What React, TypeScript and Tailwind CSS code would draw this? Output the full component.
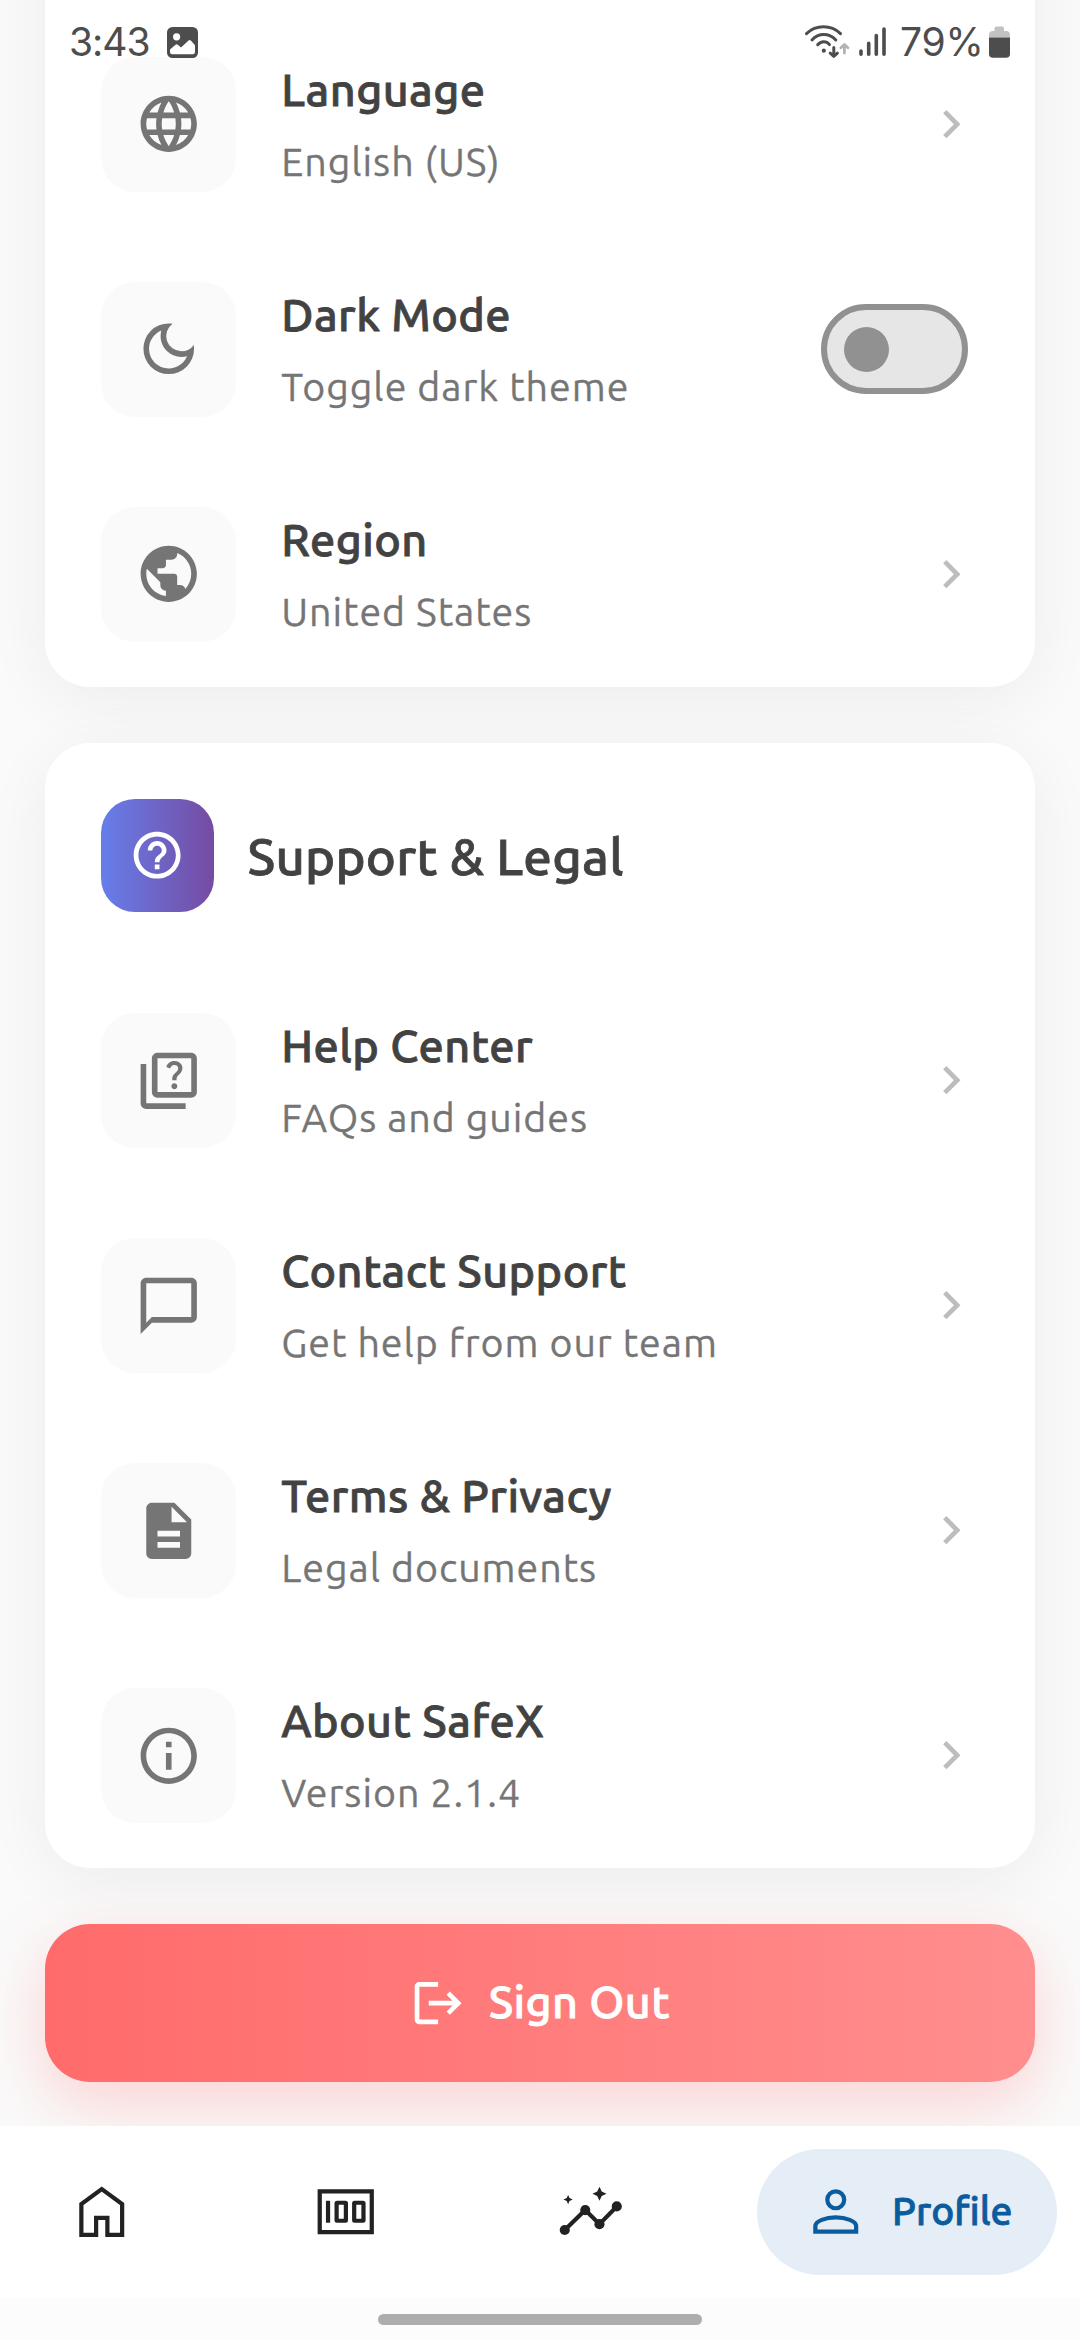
import type { ReactNode } from "react";
import type { IconType } from "react-icons";
import {
  MdChatBubbleOutline,
  MdChevronRight,
  MdDescription,
  MdHelpOutline,
  MdInfoOutline,
  MdLanguage,
  MdLogout,
  MdOutlineDarkMode,
  MdOutlineQuiz,
  MdPublic,
} from "react-icons/md";

function WifiIcon() {
  return (
    <svg className="h-[36px] w-[46px]" viewBox="804 25 46 36" fill="none" strokeLinecap="round" strokeLinejoin="round">
      <g stroke="#4d4d4d" strokeWidth="3">
        <path d="M806.5 34.6C816 25.5 831 25.5 840.5 34.6" />
        <path d="M812 41C818.5 33.8 829 33.8 835.8 41" />
        <path d="M817.7 45.8C821 41.7 826.5 41.7 829.5 45.6" />
        <path d="M833.8 48.5V57M830.2 54.2L833.8 57.4L837.4 54.2" />
      </g>
      <circle cx="823.8" cy="51.7" r="2.1" fill="#4d4d4d" />
      <path d="M844.4 54V45.8M840.9 48.8L844.4 45.5L847.9 48.8" stroke="#b3b3b3" strokeWidth="2.8" />
    </svg>
  );
}

function SignalIcon() {
  return (
    <svg className="h-[30px] w-[27px]" viewBox="859 28 27 30" stroke="#4d4d4d" strokeWidth="3.6" strokeLinecap="round">
      <path d="M861 52V55.2M868.7 44.4V55.2M876.3 36.6V55.2M884 30V55.2" />
    </svg>
  );
}

function BatteryIcon() {
  return (
    <svg className="h-[32px] w-[21px]" viewBox="0 0 21 32">
      <path d="M5.5 5V2.5Q5.5 0.5 7.5 0.5H13Q15 0.5 15 2.5V5H17Q21 5 21 9V11.5H0V9Q0 5 4 5Z" fill="#c2c2c2" />
      <path d="M0 11.5H21V28Q21 31.8 17 31.8H4Q0 31.8 0 28Z" fill="#4d4d4d" />
    </svg>
  );
}

function PhotoIcon() {
  return (
    <svg className="size-[31px]" viewBox="0 0 31 31">
      <rect width="31" height="31" rx="5.5" fill="#4d4d4d" />
      <circle cx="9.6" cy="9.8" r="3.6" fill="#fff" />
      <path d="M3 22.6L8.6 17.7Q9.7 16.8 10.8 17.7L14 20.4L21.6 13.6Q22.8 12.6 24 13.7L28 18.3V25Q28 27.3 25.7 27.3H5.3Q3 27.3 3 25Z" fill="#fff" />
    </svg>
  );
}

function HomeIcon() {
  return (
    <svg className="size-[67.5px]" viewBox="0 0 24 24" fill="none" stroke="#222" strokeWidth="1.5">
      <path d="M4.75 20.25V9.25L12 3.95L19.25 9.25V20.25H14V14.15H10V20.25Z" />
    </svg>
  );
}

function MoneyIcon() {
  return (
    <svg className="size-[67.5px]" viewBox="0 0 24 24" fill="none" stroke="#222" strokeWidth="1.5">
      <path d="M2.75 4.75H21.25V19.25H2.75Z" />
      <path d="M5.7 8.1V15.9" />
      <rect x="8.75" y="8.8" width="3.3" height="6.4" rx="0.15" />
      <rect x="15" y="8.8" width="3.3" height="6.4" rx="0.15" />
    </svg>
  );
}

function InsightsIcon() {
  return (
    <svg className="size-[67.5px]" viewBox="0 0 24 24" fill="#222">
      <path d="M2.75 18.5L10.05 11.4L15.1 16.4L21.25 10.1" fill="none" stroke="#222" strokeWidth="1.5" />
      <circle cx="2.75" cy="18.5" r="1.8" />
      <circle cx="10.05" cy="11.4" r="1.8" />
      <circle cx="15.1" cy="16.4" r="1.8" />
      <circle cx="21.25" cy="10.1" r="1.8" />
      <path d="M15.1 3.1L15.9 4.8L17.6 5.6L15.9 6.4L15.1 8.1L14.3 6.4L12.6 5.6L14.3 4.8Z" />
      <path d="M3.95 6L4.45 7.15L5.6 7.65L4.45 8.15L3.95 9.3L3.45 8.15L2.3 7.65L3.45 7.15Z" />
    </svg>
  );
}

function PersonIcon() {
  return (
    <svg className="size-[67.5px]" viewBox="0 0 24 24" fill="none" stroke="#0b5c9e" strokeWidth="1.5">
      <circle cx="12" cy="7.75" r="3" />
      <path d="M4.75 19.1V17.1C4.75 15.3 8.4 14 12 14S19.25 15.3 19.25 17.1V19.1Z" />
    </svg>
  );
}

function StatusBar() {
  return (
    <div className="absolute inset-x-0 top-0 z-10 flex h-[84px] items-center pl-[69px] pr-[70px] font-['Inter',sans-serif] text-[39px] font-[370] text-[#4d4d4d]">
      <span className="w-[98px] tracking-[-1px]">3:43</span>
      <PhotoIcon />
      <div className="ml-auto flex items-center">
        <WifiIcon />
        <div className="ml-[9px]">
          <SignalIcon />
        </div>
        <span className="ml-[14px] w-[89px] tracking-[-0.2px]">79%</span>
        <BatteryIcon />
      </div>
    </div>
  );
}

function Switch() {
  return (
    <div className="mr-[11.25px] flex h-[90px] w-[146.25px] items-center rounded-full border-[6px] border-[#919191] bg-[#e6e6e6] pl-[16.5px]">
      <div className="size-[45px] rounded-full bg-[#919191]" />
    </div>
  );
}

type RowProps = { icon: IconType; title: string; detail: string; control?: ReactNode };

function Row({ icon: Icon, title, detail, control }: RowProps) {
  return (
    <div className="flex h-[135px] items-center">
      <div className="flex size-[135px] items-center justify-center rounded-[34px] bg-[#fafafa]">
        <Icon className="size-[67.5px] text-[#757575]" />
      </div>
      <div className="ml-[45px] flex flex-1 flex-col gap-[13px]">
        <span className="text-[45px] leading-[61px] font-medium tracking-[0.43px] text-[#424242] [-webkit-text-stroke:0.8px_#424242]">{title}</span>
        <span className="text-[39.375px] leading-[56px] tracking-[0.96px] text-[#757575] [-webkit-text-stroke:0.3px_#757575]">{detail}</span>
      </div>
      {control ?? <MdChevronRight className="size-[56.25px] text-[#bdbdbd]" />}
    </div>
  );
}

const cardClass = "bg-white px-[56.25px] pb-[45px] shadow-[0_11px_65px_rgba(0,0,0,0.06)]";

function NavItem({ children }: { children: ReactNode }) {
  return <div className="flex h-[126px] items-center px-[45px]">{children}</div>;
}

export default function App() {
  return (
    <div className="relative flex h-[2340px] w-[1080px] flex-col overflow-hidden bg-[#fafafa] font-['Ubuntu','Noto_Sans',sans-serif]">
      <StatusBar />

      <main className="flex h-[2125.7px] shrink-0 flex-col overflow-hidden px-[45px]">
        <section className={`${cardClass} -mt-[200px] flex shrink-0 flex-col gap-[90px] rounded-[45px] pt-[256.5px]`}>
          <Row icon={MdLanguage} title="Language" detail="English (US)" />
          <Row icon={MdOutlineDarkMode} title="Dark Mode" detail="Toggle dark theme" control={<Switch />} />
          <Row icon={MdPublic} title="Region" detail="United States" />
        </section>

        <section className={`${cardClass} mt-[56.25px] shrink-0 rounded-[45px] pt-[56.25px]`}>
          <div className="flex items-center">
            <div className="flex size-[112.5px] items-center justify-center rounded-[34px] bg-linear-to-r/srgb from-[#667eea] to-[#764ba2]">
              <MdHelpOutline className="size-[56.25px] text-white" />
            </div>
            <h2 className="ml-[33.75px] pt-[2px] text-[51px] leading-[68px] font-medium tracking-[0.22px] text-[#424242] [-webkit-text-stroke:0.8px_#424242]">
              Support &amp; Legal
            </h2>
          </div>
          <div className="mt-[101.25px] flex flex-col gap-[90px]">
            <Row icon={MdOutlineQuiz} title="Help Center" detail="FAQs and guides" />
            <Row icon={MdChatBubbleOutline} title="Contact Support" detail="Get help from our team" />
            <Row icon={MdDescription} title="Terms & Privacy" detail="Legal documents" />
            <Row icon={MdInfoOutline} title="About SafeX" detail="Version 2.1.4" />
          </div>
        </section>

        <button className="mt-[56.25px] flex h-[157.5px] shrink-0 items-center justify-center gap-[22.5px] rounded-[45px] bg-linear-to-r/srgb from-[#ff6b6b] to-[#ff8e8e] text-white shadow-[0_22px_65px_rgba(255,107,107,0.28)]">
          <MdLogout className="size-[56.25px]" />
          <span className="pb-[2px] text-[45px] leading-[60px] font-medium tracking-[0.4px] [-webkit-text-stroke:0.8px_#fff]">Sign Out</span>
        </button>
      </main>

      <nav className="flex h-[172.3px] shrink-0 items-center justify-between bg-white px-[22.5px]">
        <NavItem>
          <HomeIcon />
        </NavItem>
        <NavItem>
          <MoneyIcon />
        </NavItem>
        <NavItem>
          <InsightsIcon />
        </NavItem>
        <div className="flex h-[126px] items-center gap-[22.5px] rounded-full bg-[#e5eef6] px-[45px] text-[#0b5c9e]">
          <PersonIcon />
          <span className="pb-[2px] text-[39px] leading-[54px] font-medium [-webkit-text-stroke:0.8px_#0b5c9e]">Profile</span>
        </div>
      </nav>

      <div className="flex flex-1 justify-center bg-[#fcfcfc] pt-[16px]">
        <div className="h-[11px] w-[324px] rounded-full bg-[#adadad]" />
      </div>
    </div>
  );
}
